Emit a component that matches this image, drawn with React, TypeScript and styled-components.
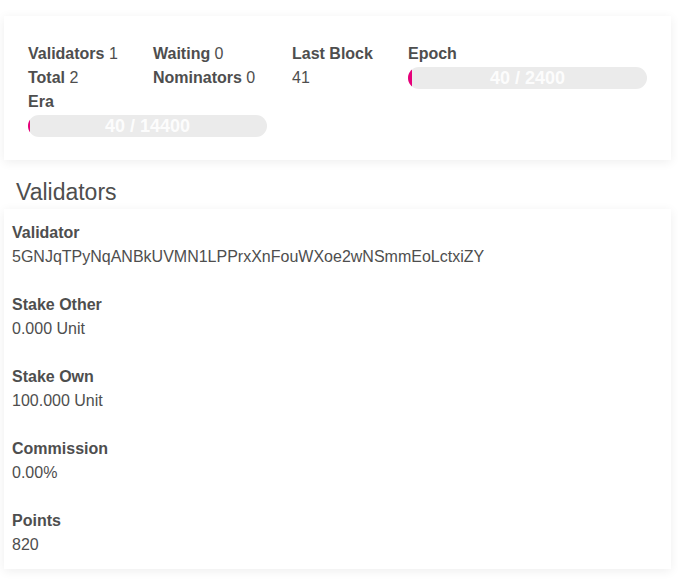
import React from 'react';
import styled, {createGlobalStyle} from 'styled-components';

const GlobalStyle = createGlobalStyle`
  html, body {
    margin: 0;
    padding: 0;
    background: #fff;
    font-family: "Liberation Sans", Arial, sans-serif;
    color: #4e4e4e;
  }
`

type BarProps = {
    value: number
    total: number
}

const ProgressBar = ({value, total}: BarProps) => {
    const pct = Math.max(value / total * 100, 0.9);
    return (
        <Track>
            <Fill style={{width: `${pct}%`}}/>
            <BarLabel>{value} / {total}</BarLabel>
        </Track>
    );
};

const validator = [
    {label: 'Validator', value: '5GNJqTPyNqANBkUVMN1LPPrxXnFouWXoe2wNSmmEoLctxiZY'},
    {label: 'Stake Other', value: '0.000 Unit'},
    {label: 'Stake Own', value: '100.000 Unit'},
    {label: 'Commission', value: '0.00%'},
    {label: 'Points', value: '820'},
];

export default function App() {
    return (
        <Page>
            <GlobalStyle/>
            <SummaryCard>
                <SummaryGrid>
                    <Column width={125}>
                        <Line><b>Validators</b> 1</Line>
                        <Line><b>Total</b> 2</Line>
                    </Column>
                    <Column width={139}>
                        <Line><b>Waiting</b> 0</Line>
                        <Line><b>Nominators</b> 0</Line>
                    </Column>
                    <Column width={116}>
                        <Line><b>Last Block</b></Line>
                        <Line>41</Line>
                    </Column>
                    <Column width={239}>
                        <Line><b>Epoch</b></Line>
                        <ProgressBar value={40} total={2400}/>
                    </Column>
                    <Column width={239}>
                        <Line><b>Era</b></Line>
                        <ProgressBar value={40} total={14400}/>
                    </Column>
                </SummaryGrid>
            </SummaryCard>

            <SectionTitle>Validators</SectionTitle>

            <ListCard>
                {validator.map(item => (
                    <Field key={item.label}>
                        <FieldLabel>{item.label}</FieldLabel>
                        <FieldValue>{item.value}</FieldValue>
                    </Field>
                ))}
            </ListCard>
        </Page>
    );
}

const Page = styled.div`
  display: flex;
  flex-direction: column;
  width: 667px;
  padding: 16px 7px 11px 4px;
`

const Card = styled.div`
  background: #fff;
  box-shadow: 0 2px 10px rgba(0, 0, 0, 0.07);
`

const SummaryCard = styled(Card)`
  height: 144px;
  box-sizing: border-box;
  padding: 26px 24px 24px;
`

const SummaryGrid = styled.div`
  display: flex;
  flex-wrap: wrap;
`

const Column = styled.div<{width: number}>`
  display: flex;
  flex-direction: column;
  width: ${props => props.width}px;
`

const Line = styled.div`
  font-size: 16px;
  line-height: 24px;
  white-space: nowrap;

  b {
    font-weight: 700;
  }
`

const Track = styled.div`
  position: relative;
  height: 22px;
  margin: 1px 0;
  border-radius: 11px;
  background: #ebebeb;
  overflow: hidden;
`

const Fill = styled.div`
  height: 100%;
  background: #e6007a;
`

const BarLabel = styled.div`
  position: absolute;
  inset: 0;
  display: flex;
  align-items: center;
  justify-content: center;
  color: rgba(255, 255, 255, 0.9);
  font-size: 18px;
  font-weight: 700;
`

const SectionTitle = styled.h1`
  margin: 0;
  padding: 17px 12px 0;
  height: 32px;
  font-size: 23px;
  font-weight: 400;
  line-height: 30px;
  color: #4e4e4e;
`

const ListCard = styled(Card)`
  display: flex;
  flex-direction: column;
  gap: 24px;
  padding: 12px 8px;
`

const Field = styled.div`
  display: flex;
  flex-direction: column;
`

const FieldLabel = styled.div`
  font-size: 16px;
  font-weight: 700;
  line-height: 24px;
`

const FieldValue = styled.div`
  font-size: 16px;
  line-height: 24px;
`
